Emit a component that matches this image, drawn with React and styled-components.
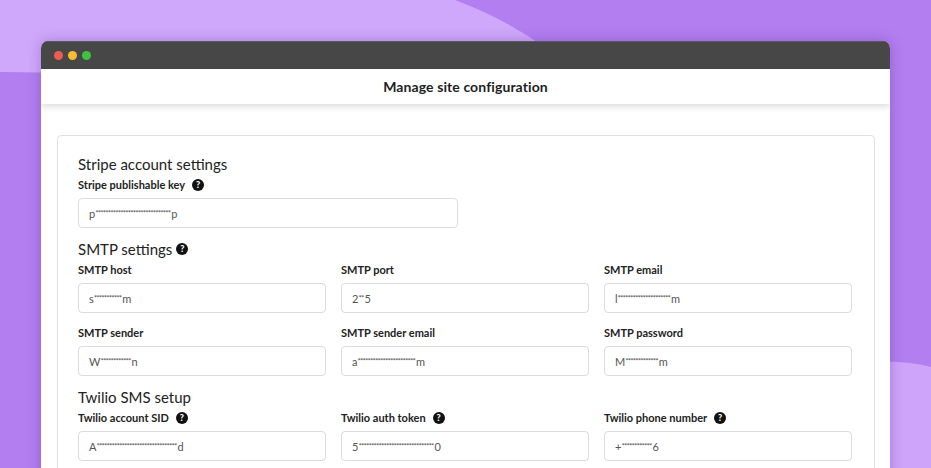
import styled, { createGlobalStyle } from "styled-components";

const GlobalStyle = createGlobalStyle`
    html, body {
        margin: 0;
        padding: 0;
        width: 931px;
        height: 468px;
        overflow: hidden;
        background: #b27ef0;
        font-family: "Lato", "Noto Sans", sans-serif;
    }
`;

const Page = styled.div`
    position: relative;
    width: 931px;
    height: 468px;
    overflow: hidden;
    box-sizing: border-box;
    padding-top: 41px;
    display: flex;
    justify-content: center;
    align-items: flex-start;
`;
const Backdrop = styled.svg`
    position: absolute;
    left: 0;
    top: 0;
    width: 931px;
    height: 468px;
    z-index: 0;
`;
const Window = styled.div`
    position: relative;
    z-index: 1;
    width: 849px;
    height: 520px;
    background: #ffffff;
    border-radius: 7px 7px 0 0;
    overflow: hidden;
    box-shadow: 0 0 14px rgba(70, 20, 130, 0.28);
`;
const TitleBar = styled.div`
    height: 28px;
    background: #474747;
    border-top: 1px solid #5a5a5a;
    box-sizing: border-box;
    display: flex;
    align-items: center;
    gap: 5px;
    padding-left: 13px;
`;
const Light = styled.span`
    width: 9px;
    height: 9px;
    border-radius: 50%;
    background: ${(p) => p.$color};
`;
const Header = styled.header`
    position: relative;
    z-index: 1;
    height: 35px;
    display: flex;
    align-items: center;
    justify-content: center;
    background: #ffffff;
    box-shadow: 0 3px 6px rgba(0, 0, 0, 0.13);
    font-size: 14px;
    font-weight: 700;
    color: #1e1e1e;
    letter-spacing: 0.1px;
`;
const Body = styled.div`
    padding: 31px 15px 0 16px;
`;
const Card = styled.div`
    border: 1px solid #e0e0e0;
    border-radius: 4px;
    padding: 18px 22px 20px 20px;
`;
const SectionTitle = styled.h2`
    margin: ${(p) => (p.$first ? "0" : "11px")} 0 4px 0;
    font-size: 15px;
    line-height: 20px;
    font-weight: 400;
    color: #222;
    display: flex;
    align-items: center;
    gap: 4px;
`;
const Grid = styled.div`
    display: grid;
    grid-template-columns: repeat(3, 248px);
    column-gap: 15px;
    row-gap: 13px;
`;
const Field = styled.div`
    display: flex;
    flex-direction: column;
    width: ${(p) => p.$width || "auto"};
`;
const Label = styled.label`
    display: flex;
    align-items: center;
    gap: 7px;
    height: 14px;
    margin-bottom: 6px;
    font-size: 11px;
    line-height: 14px;
    font-weight: 700;
    color: #222;
`;
const Help = styled.span`
    width: 12px;
    height: 12px;
    border-radius: 50%;
    background: #111;
    color: #fff;
    font-size: 9px;
    font-weight: 900;
    line-height: 12px;
    text-align: center;
    flex-shrink: 0;
`;
const Input = styled.div`
    height: 30px;
    box-sizing: border-box;
    border: 1px solid #dcdcdc;
    border-radius: 4px;
    padding: 0 10px;
    display: flex;
    align-items: center;
    font-size: 11px;
    color: #555;
`;
const Mask = styled.span`
    font-size: 8px;
    letter-spacing: -0.9px;
    align-self: flex-start;
    margin-top: 9px;
    margin-right: 1px;
`;

function Masked({ first, last, count }) {
    return (
        <Input>
            {first}
            <Mask>{"*".repeat(count)}</Mask>
            {last}
        </Input>
    );
}

function TextField({ label, help, width, value }) {
    return (
        <Field $width={width}>
            <Label>
                {label}
                {help && <Help>?</Help>}
            </Label>
            <Masked {...value} />
        </Field>
    );
}

const smtp = [
    { label: "SMTP host", value: { first: "s", last: "m", count: 11 } },
    { label: "SMTP port", value: { first: "2", last: "5", count: 2 } },
    { label: "SMTP email", value: { first: "l", last: "m", count: 21 } },
    { label: "SMTP sender", value: { first: "W", last: "n", count: 12 } },
    { label: "SMTP sender email", value: { first: "a", last: "m", count: 23 } },
    { label: "SMTP password", value: { first: "M", last: "m", count: 13 } },
];

const twilio = [
    { label: "Twilio account SID", value: { first: "A", last: "d", count: 32 } },
    { label: "Twilio auth token", value: { first: "5", last: "0", count: 30 } },
    { label: "Twilio phone number", value: { first: "+", last: "6", count: 12 } },
];

export default function App() {
    return (
        <>
            <GlobalStyle />
            <Page>
                <Backdrop viewBox="0 0 931 468">
                    <rect width="931" height="468" fill="#b27ef0" />
                    <path d="M0 0 L455 0 Q530 28 585 80 L0 72 Z" fill="#cfa8fb" />
                    <path d="M860 362 Q905 360 931 367 L931 468 L860 468 Z" fill="#cda4fa" />
                </Backdrop>
                <Window>
                    <TitleBar>
                        <Light $color="#ee5b50" />
                        <Light $color="#f4bd33" />
                        <Light $color="#3fc240" />
                    </TitleBar>
                    <Header>Manage site configuration</Header>
                    <Body>
                        <Card>
                            <SectionTitle $first>Stripe account settings</SectionTitle>
                            <TextField
                                label="Stripe publishable key"
                                help
                                width="380px"
                                value={{ first: "p", last: "p", count: 30 }}
                            />
                            <SectionTitle>
                                SMTP settings <Help>?</Help>
                            </SectionTitle>
                            <Grid>
                                {smtp.map((f) => (
                                    <TextField key={f.label} {...f} />
                                ))}
                            </Grid>
                            <SectionTitle>Twilio SMS setup</SectionTitle>
                            <Grid>
                                {twilio.map((f) => (
                                    <TextField key={f.label} help {...f} />
                                ))}
                            </Grid>
                        </Card>
                    </Body>
                </Window>
            </Page>
        </>
    );
}
